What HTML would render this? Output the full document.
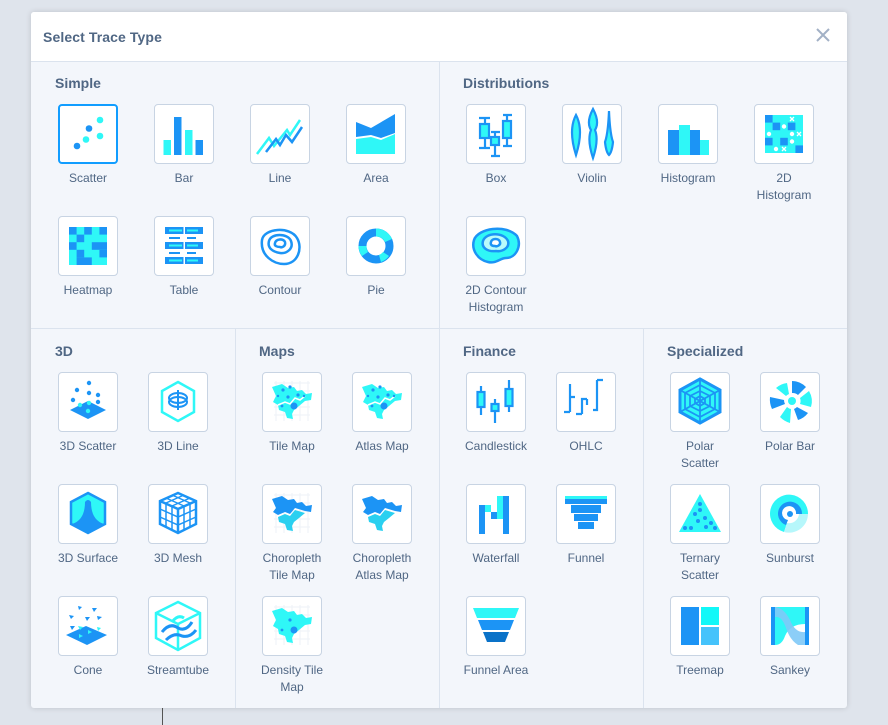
<!DOCTYPE html>
<html><head><meta charset="utf-8"><style>
*{margin:0;padding:0;box-sizing:border-box}
body{width:888px;height:725px;background:#dfe4ec;font-family:"Liberation Sans",sans-serif;position:relative;overflow:hidden}
.bgl{position:absolute;background:#cfd6e0}
.modal{position:absolute;left:31px;top:12px;width:816px;height:696px;background:#f3f6fb;border-radius:3px;box-shadow:0 0 6px rgba(0,0,0,.15);overflow:hidden}
.hdr{position:absolute;left:0;top:0;width:816px;height:50px;background:#fff;border-bottom:1px solid #dbe3ee}
.hdr .t{position:absolute;left:12px;top:17px;font-size:14px;color:#506784;font-weight:bold;letter-spacing:.1px}
.x{position:absolute;left:784px;top:15px}
.v{position:absolute;width:1px;background:#dbe3ee}
.h{position:absolute;height:1px;background:#dbe3ee}
.st{position:absolute;font-size:14px;color:#506784;font-weight:bold}
.it{position:absolute;width:90px}
.bx{position:absolute;left:15px;top:0;width:60px;height:60px;background:#fff;border:1px solid #c8d4e3;border-radius:4px}
.bx.sel{border:2px solid #119dff}
.bx svg{position:absolute;left:-1px;top:-1px}
.lb{position:absolute;left:-5px;top:66px;width:100px;text-align:center;font-size:12px;line-height:17px;color:#506784}
</style></head><body>
<div class="bgl" style="left:162px;top:708px;width:1px;height:17px;background:#555"></div>
<div class="modal">
<div class="hdr"><div class="t">Select Trace Type</div>
<svg class="x" width="16" height="16" viewBox="0 0 16 16"><path d="M2 2L14 14M14 2L2 14" stroke="#a2b1c6" stroke-width="2"/></svg></div>
<div class="v" style="left:408px;top:50px;height:646px"></div>
<div class="h" style="left:0;top:316px;width:816px"></div>
<div class="v" style="left:204px;top:317px;height:379px"></div>
<div class="v" style="left:612px;top:317px;height:379px"></div>
<div class="st" style="left:24px;top:63px">Simple</div>
<div class="st" style="left:432px;top:63px">Distributions</div>
<div class="st" style="left:24px;top:331px">3D</div>
<div class="st" style="left:228px;top:331px">Maps</div>
<div class="st" style="left:432px;top:331px">Finance</div>
<div class="st" style="left:636px;top:331px">Specialized</div>
</div>
<div id="items" style="position:absolute;left:0;top:0">
<!-- Simple -->
<div class="it" style="left:43px;top:104px"><div class="bx sel"><svg width="60" height="60" viewBox="0 0 60 60"><circle cx="18" cy="41" r="3.3" fill="#1c94f5"/><circle cx="27" cy="34.5" r="3.3" fill="#2ff7f7"/><circle cx="30" cy="23.5" r="3.3" fill="#1c94f5"/><circle cx="41" cy="31" r="3.3" fill="#2ff7f7"/><circle cx="41" cy="15" r="3.3" fill="#2ff7f7"/></svg></div><div class="lb">Scatter</div></div>
<div class="it" style="left:139px;top:104px"><div class="bx"><svg width="60" height="60" viewBox="0 0 60 60"><rect x="9.5" y="36" width="7.5" height="15" fill="#2ff7f7"/><rect x="20" y="13" width="7.5" height="38" fill="#1c94f5"/><rect x="31" y="26" width="7.5" height="25" fill="#2ff7f7"/><rect x="41.5" y="36" width="7.5" height="15" fill="#1c94f5"/></svg></div><div class="lb">Bar</div></div>
<div class="it" style="left:235px;top:104px"><div class="bx"><svg width="60" height="60" viewBox="0 0 60 60"><path d="M7 50L19 34L24 42L37 26L40 31L50 16" stroke="#2ff7f7" stroke-width="2.5" fill="none"/><path d="M16 48L26 35L30 41L36 31L42 38L52 23" stroke="#1c94f5" stroke-width="2.5" fill="none"/></svg></div><div class="lb">Line</div></div>
<div class="it" style="left:331px;top:104px"><div class="bx"><svg width="60" height="60" viewBox="0 0 60 60"><path d="M10 18L25 24L49 10L49 29L35 34L25 31L10 33Z" fill="#1c94f5"/><path d="M10 35L25 33L35 36L49 30L49 50L10 50Z" fill="#2ff7f7"/></svg></div><div class="lb">Area</div></div>
<div class="it" style="left:43px;top:216px"><div class="bx"><svg width="60" height="60" viewBox="0 0 60 60"><rect x="11" y="11" width="38" height="38" fill="#2ff7f7"/><g fill="#1c94f5"><rect x="11" y="11" width="7.6" height="7.6"/><rect x="26.2" y="11" width="7.6" height="7.6"/><rect x="41.4" y="11" width="7.6" height="7.6"/><rect x="18.6" y="18.6" width="7.6" height="7.6"/><rect x="11" y="26.2" width="7.6" height="7.6"/><rect x="33.8" y="26.2" width="15.2" height="7.6"/><rect x="18.6" y="33.8" width="7.6" height="7.6"/><rect x="41.4" y="33.8" width="7.6" height="7.6"/><rect x="18.6" y="41.4" width="15.2" height="7.6"/></g></svg></div><div class="lb">Heatmap</div></div>
<div class="it" style="left:139px;top:216px"><div class="bx"><svg width="60" height="60" viewBox="0 0 60 60"><g fill="#1c94f5"><rect x="11" y="11" width="38" height="7"/><rect x="11" y="26" width="38" height="7"/><rect x="11" y="41" width="38" height="7"/></g><g fill="#2ff7f7"><rect x="15" y="13.5" width="13" height="2"/><rect x="33" y="13.5" width="11" height="2"/><rect x="15" y="28.5" width="13" height="2"/><rect x="33" y="28.5" width="11" height="2"/><rect x="15" y="43.5" width="13" height="2"/><rect x="33" y="43.5" width="11" height="2"/></g><g fill="#1c94f5"><rect x="15" y="21" width="11" height="2"/><rect x="33" y="21" width="9" height="2"/><rect x="15" y="36" width="11" height="2"/><rect x="33" y="36" width="9" height="2"/></g><rect x="29.5" y="11" width="1.5" height="37" fill="#fff"/></svg></div><div class="lb">Table</div></div>
<div class="it" style="left:235px;top:216px"><div class="bx"><svg width="60" height="60" viewBox="0 0 60 60" fill="none" stroke="#1c94f5" stroke-width="2.5"><path d="M12 24C14 12 40 10 47 22C53 32 48 48 34 48C24 48 10 40 12 24Z"/><path d="M19 25C21 17 38 17 41 25C44 33 36 38 30 37C23 36 17 32 19 25Z"/><path d="M25 27C26 23 33 22 35 26C36 30 32 32 30 31C27 31 24 30 25 27Z"/></svg></div><div class="lb">Contour</div></div>
<div class="it" style="left:331px;top:216px"><div class="bx"><svg width="60" height="60" viewBox="0 0 60 60"><circle cx="30" cy="30" r="13.5" fill="none" stroke="#1c94f5" stroke-width="8"/><path d="M30 12.5A17.5 17.5 0 0 1 46 23L39 26A9.5 9.5 0 0 0 30 20.5Z" fill="#2ff7f7"/><path d="M12.5 30A17.5 17.5 0 0 0 16 40L22 36A9.5 9.5 0 0 1 20.5 30Z" fill="#2ff7f7"/><path d="M35 46A17.5 17.5 0 0 0 43 40L37 36A9.5 9.5 0 0 1 33 39Z" fill="#2ff7f7"/></svg></div><div class="lb">Pie</div></div>
<!-- Distributions -->
<div class="it" style="left:451px;top:104px"><div class="bx"><svg width="60" height="60" viewBox="0 0 60 60" stroke="#1c94f5" stroke-width="2.2"><path d="M19 14V44M13 14H24M13 44H24M29 28V52M25 28H34M25 52H34M41 11V42M37 11H46M37 42H46" fill="none"/><rect x="14" y="20" width="9" height="14" fill="#2ff7f7"/><rect x="25" y="33" width="8" height="8" fill="#2ff7f7"/><rect x="37" y="17" width="8" height="17" fill="#2ff7f7"/></svg></div><div class="lb">Box</div></div>
<div class="it" style="left:547px;top:104px"><div class="bx"><svg width="60" height="60" viewBox="0 0 60 60" stroke="#1c94f5" stroke-width="2.2"><path d="M14 11Q6 26 14 51Q22 26 14 11Z" fill="#2ff7f7"/><path d="M31 5Q24 18 29 26Q25 36 31 54Q37 36 33 26Q38 18 31 5Z" fill="#2ff7f7"/><path d="M47 7Q46 30 43 38Q44 48 47 51Q50 48 51 38Q48 30 47 7Z" fill="#2ff7f7"/></svg></div><div class="lb">Violin</div></div>
<div class="it" style="left:643px;top:104px"><div class="bx"><svg width="60" height="60" viewBox="0 0 60 60"><rect x="10" y="26" width="11" height="25" fill="#1c94f5"/><rect x="21" y="21" width="11" height="30" fill="#2ff7f7"/><rect x="32" y="26" width="10" height="25" fill="#1c94f5"/><rect x="42" y="36" width="9" height="15" fill="#2ff7f7"/></svg></div><div class="lb">Histogram</div></div>
<div class="it" style="left:739px;top:104px"><div class="bx"><svg width="60" height="60" viewBox="0 0 60 60"><rect x="11" y="11" width="38" height="38" fill="#2ff7f7"/><g fill="#1c94f5"><rect x="11" y="11" width="7.6" height="7.6"/><rect x="18.6" y="18.6" width="7.6" height="7.6"/><rect x="33.8" y="18.6" width="7.6" height="7.6"/><rect x="11" y="33.8" width="7.6" height="7.6"/><rect x="41.4" y="41.4" width="7.6" height="7.6"/><rect x="26.2" y="33.8" width="7.6" height="7.6"/></g><g fill="#fff"><circle cx="30" cy="22.5" r="2.2"/><circle cx="15" cy="30" r="2.2"/><circle cx="38" cy="30" r="2.2"/><circle cx="38" cy="37.5" r="2.2"/><circle cx="22" cy="45" r="2.2"/></g><path d="M36 13L40 17M40 13L36 17M43 28L47 32M47 28L43 32M28 43L32 47M32 43L28 47" stroke="#fff" stroke-width="1.3"/></svg></div><div class="lb">2D<br>Histogram</div></div>
<div class="it" style="left:451px;top:216px"><div class="bx"><svg width="60" height="60" viewBox="0 0 60 60" stroke="#1c94f5" stroke-width="2.5"><path d="M8 24C12 12 40 8 51 20C56 30 50 42 40 42C34 42 30 48 22 46C12 44 5 34 8 24Z" fill="#2ff7f7"/><path d="M17 25C20 16 38 16 42 25C44 32 36 36 30 35C22 36 15 32 17 25Z" fill="#b8fbfb"/><path d="M25 26C26 22 33 22 34 26C35 29 31 31 29 30C26 30 24 29 25 26Z" fill="#fff"/></svg></div><div class="lb">2D Contour<br>Histogram</div></div>
<!-- 3D -->
<div class="it" style="left:43px;top:372px"><div class="bx"><svg width="60" height="60" viewBox="0 0 60 60"><path d="M12 38L30 29L48 38L30 47Z" fill="#1c94f5"/><g fill="#1c94f5"><circle cx="31" cy="11" r="2.2"/><circle cx="19" cy="18" r="2.2"/><circle cx="31" cy="21" r="2.2"/><circle cx="40" cy="23" r="2.2"/><circle cx="15" cy="28" r="2.2"/><circle cx="40" cy="30" r="2.2"/></g><g fill="#2ff7f7"><circle cx="22" cy="33" r="2.2"/><circle cx="31" cy="31" r="2.2"/><circle cx="30" cy="39" r="2.2"/></g></svg></div><div class="lb">3D Scatter</div></div>
<div class="it" style="left:133px;top:372px"><div class="bx"><svg width="60" height="60" viewBox="0 0 60 60" fill="none"><path d="M30 10L46 19V40L30 49L14 40V19Z" stroke="#2ff7f7" stroke-width="2.5"/><ellipse cx="30" cy="26" rx="9" ry="5" stroke="#1c94f5" stroke-width="2"/><ellipse cx="30" cy="30" rx="9" ry="5" stroke="#1c94f5" stroke-width="2"/><path d="M30 18V38" stroke="#1c94f5" stroke-width="2"/></svg></div><div class="lb">3D Line</div></div>
<div class="it" style="left:43px;top:484px"><div class="bx"><svg width="60" height="60" viewBox="0 0 60 60"><path d="M30 9L47 18V40L30 49L13 40V18Z" fill="#2ff7f7" stroke="#1c94f5" stroke-width="2.5"/><path d="M14 40Q27 36 27 18Q30 14 33 18Q33 36 46 40L30 48Z" fill="#1c94f5"/></svg></div><div class="lb">3D Surface</div></div>
<div class="it" style="left:133px;top:484px"><div class="bx"><svg width="60" height="60" viewBox="0 0 60 60" fill="none" stroke="#1c94f5" stroke-width="2.5"><path d="M30 9L48 17V40L30 49L12 40V17Z M12 17L30 25L48 17 M30 25V49"/><path d="M18 20V44M24 23V47M36 23V47M42 20V44M12 25L30 33L48 25M12 33L30 41L48 33M18 14L36 22M24 11L42 19M42 14L24 22M36 11L18 19" stroke-width="1.5"/></svg></div><div class="lb">3D Mesh</div></div>
<div class="it" style="left:43px;top:596px"><div class="bx"><svg width="60" height="60" viewBox="0 0 60 60"><path d="M8 39L28 30L49 39L29 49Z" fill="#1c94f5"/><g fill="#1c94f5"><path d="M20 10l4 1-3 3z"/><path d="M34 12l5 0-3 4z"/><path d="M11 19l5 1-3 3z"/><path d="M27 21l5 0-3 4z"/><path d="M39 20l5 1-4 3z"/><path d="M12 30l5 0-3 4z"/></g><g fill="#2ff7f7"><path d="M20 30l5 1-3 3z"/><path d="M30 34l4 2-4 2z"/><path d="M39 31l4 1-3 3z"/><path d="M21 38l4 2-4 2z"/></g></svg></div><div class="lb">Cone</div></div>
<div class="it" style="left:133px;top:596px"><div class="bx"><svg width="60" height="60" viewBox="0 0 60 60" fill="none"><path d="M30 6L52 17V42L30 54L8 42V17Z M8 17L30 28L52 17 M30 28V54" stroke="#2ff7f7" stroke-width="2.5"/><path d="M14 36Q22 26 30 32Q38 36 44 26" stroke="#1c94f5" stroke-width="3"/><path d="M18 44Q26 36 34 40Q42 42 48 34" stroke="#1c94f5" stroke-width="3"/><path d="M24 26Q30 18 36 22" stroke="#2ff7f7" stroke-width="3"/></svg></div><div class="lb">Streamtube</div></div>
<!-- Maps -->
<div class="it" style="left:247px;top:372px"><div class="bx"><svg width="60" height="60" viewBox="0 0 60 60"><path d="M12 11H48M12 19H48M12 27H48M12 35H48M12 43H48M14 9V49M22 9V49M30 9V49M38 9V49M46 9V49" stroke="#eef2f7" stroke-width="1"/><path d="M10 15L20 12L26 16L32 15L35 19L40 18L44 22L50 21L49 28L43 29L37 34L32 38L30 42L31 47L25 46L23 40L17 38L16 33L11 30L14 24Z" fill="#2ff7f7"/><path d="M16 33L23 30L28 32L33 26L38 28L43 24" stroke="#fff" stroke-width="1.5" fill="none"/><g fill="#1c94f5"><circle cx="32" cy="34" r="3.5"/><circle cx="21" cy="18" r="1.6"/><circle cx="28" cy="15" r="1.6"/><circle cx="26" cy="25" r="1.6"/><circle cx="36" cy="23" r="1.6"/><circle cx="42" cy="24" r="1.2"/><circle cx="20" cy="34" r="1.4"/><circle cx="16" cy="24" r="1.2"/></g></svg></div><div class="lb">Tile Map</div></div>
<div class="it" style="left:337px;top:372px"><div class="bx"><svg width="60" height="60" viewBox="0 0 60 60"><path d="M10 15L20 12L26 16L32 15L35 19L40 18L44 22L50 21L49 28L43 29L37 34L32 38L30 42L31 47L25 46L23 40L17 38L16 33L11 30L14 24Z" fill="#2ff7f7"/><path d="M16 33L23 30L28 32L33 26L38 28L43 24" stroke="#fff" stroke-width="1.5" fill="none"/><g fill="#1c94f5"><circle cx="32" cy="34" r="3.5"/><circle cx="21" cy="18" r="1.6"/><circle cx="28" cy="15" r="1.6"/><circle cx="26" cy="25" r="1.6"/><circle cx="36" cy="23" r="1.6"/><circle cx="42" cy="24" r="1.2"/><circle cx="20" cy="34" r="1.4"/><circle cx="16" cy="24" r="1.2"/></g></svg></div><div class="lb">Atlas Map</div></div>
<div class="it" style="left:247px;top:484px"><div class="bx"><svg width="60" height="60" viewBox="0 0 60 60"><path d="M12 11H48M12 19H48M12 27H48M12 35H48M12 43H48M14 9V49M22 9V49M30 9V49M38 9V49M46 9V49" stroke="#eef2f7" stroke-width="1"/><path d="M10 15L20 12L26 16L32 15L35 19L40 18L44 22L50 21L49 28L43 27L33 24L28 30L23 28L16 31L11 28L14 24Z" fill="#1c94f5"/><path d="M16 33L23 30L28 32L33 26L43 29L37 34L32 38L30 42L31 47L25 46L23 40L17 38Z" fill="#2ad0f0"/></svg></div><div class="lb">Choropleth<br>Tile Map</div></div>
<div class="it" style="left:337px;top:484px"><div class="bx"><svg width="60" height="60" viewBox="0 0 60 60"><path d="M10 15L20 12L26 16L32 15L35 19L40 18L44 22L50 21L49 28L43 27L33 24L28 30L23 28L16 31L11 28L14 24Z" fill="#1c94f5"/><path d="M16 33L23 30L28 32L33 26L43 29L37 34L32 38L30 42L31 47L25 46L23 40L17 38Z" fill="#2ad0f0"/></svg></div><div class="lb">Choropleth<br>Atlas Map</div></div>
<div class="it" style="left:247px;top:596px"><div class="bx"><svg width="60" height="60" viewBox="0 0 60 60"><path d="M12 11H48M12 19H48M12 27H48M12 35H48M12 43H48M14 9V49M22 9V49M30 9V49M38 9V49M46 9V49" stroke="#eef2f7" stroke-width="1"/><path d="M10 15L20 12L26 16L32 15L35 19L40 18L44 22L50 21L49 28L43 29L37 34L32 38L30 42L31 47L25 46L23 40L17 38L16 33L11 30L14 24Z" fill="#2ff7f7"/><g fill="#1c94f5"><circle cx="32" cy="34" r="3.5"/><circle cx="28" cy="24" r="1.6"/><circle cx="20" cy="34" r="1.4"/></g></svg></div><div class="lb">Density Tile<br>Map</div></div>
<!-- Finance -->
<div class="it" style="left:451px;top:372px"><div class="bx"><svg width="60" height="60" viewBox="0 0 60 60" stroke="#1c94f5" stroke-width="2.2"><path d="M15 14V43M29 27V51M43 8V40" fill="none"/><rect x="11.5" y="20" width="7" height="15" fill="#2ff7f7"/><rect x="25.5" y="32" width="7" height="7" fill="#2ff7f7"/><rect x="39.5" y="17" width="7" height="17" fill="#2ff7f7"/></svg></div><div class="lb">Candlestick</div></div>
<div class="it" style="left:541px;top:372px"><div class="bx"><svg width="60" height="60" viewBox="0 0 60 60" fill="none" stroke="#1c94f5" stroke-width="2.2"><path d="M14 12V40M8 40H14M14 25H19M26 42V27H31M20 42H26M31 27V33M41 8V38H37M41 8H47"/></svg></div><div class="lb">OHLC</div></div>
<div class="it" style="left:451px;top:484px"><div class="bx"><svg width="60" height="60" viewBox="0 0 60 60"><rect x="13" y="21" width="6" height="29" fill="#1c94f5"/><rect x="19" y="21" width="6" height="7" fill="#2ff7f7"/><rect x="25" y="28" width="6" height="7" fill="#1c94f5"/><rect x="31" y="12" width="6" height="23" fill="#2ff7f7"/><rect x="37" y="12" width="6" height="38" fill="#1c94f5"/></svg></div><div class="lb">Waterfall</div></div>
<div class="it" style="left:541px;top:484px"><div class="bx"><svg width="60" height="60" viewBox="0 0 60 60"><rect x="9" y="12" width="42" height="8" fill="#1c94f5"/><rect x="15" y="21" width="30" height="8" fill="#1c94f5"/><rect x="18" y="30" width="24" height="7" fill="#1c94f5"/><rect x="22" y="38" width="16" height="7" fill="#1c94f5"/><rect x="9" y="12" width="42" height="3" fill="#2ff7f7"/></svg></div><div class="lb">Funnel</div></div>
<div class="it" style="left:451px;top:596px"><div class="bx"><svg width="60" height="60" viewBox="0 0 60 60"><path d="M7 12H53L49 22H11Z" fill="#2ff7f7"/><path d="M12 24H48L44 34H16Z" fill="#1c94f5"/><path d="M17 36H43L39 46H21Z" fill="#0a72c8"/></svg></div><div class="lb">Funnel Area</div></div>
<!-- Specialized -->
<div class="it" style="left:655px;top:372px"><div class="bx"><svg width="60" height="60" viewBox="0 0 60 60" fill="none" stroke="#1c94f5" stroke-width="1.8"><path d="M30 7L50 18V40L30 51L10 40V18Z" fill="#2ff7f7" stroke-width="3"/><path d="M30 13L45 21V37L30 45L15 37V21Z M30 19L40 24V34L30 39L20 34V24Z M30 24L35 27V31L30 34L25 31V27Z M30 7V51M10 18L50 40M50 18L10 40"/></svg></div><div class="lb">Polar<br>Scatter</div></div>
<div class="it" style="left:745px;top:372px"><div class="bx"><svg width="60" height="60" viewBox="0 0 60 60"><g transform="translate(32,29)"><path d="M0 -20A20 20 0 0 1 14 -14L6 -6A8 8 0 0 0 0 -8Z" fill="#1c94f5"/><path d="M17 -10A20 20 0 0 1 19 6L8 3A8 8 0 0 0 8 -3Z" fill="#2ff7f7"/><path d="M16 12A20 20 0 0 1 6 19L2 8A8 8 0 0 0 5 6Z" fill="#1c94f5"/><path d="M-2 22A22 22 0 0 1 -12 16L-5 6A8 8 0 0 0 -1 8Z" fill="#2ff7f7"/><path d="M-20 8A22 22 0 0 1 -22 -4L-8 -1A8 8 0 0 0 -7 3Z" fill="#1c94f5"/><path d="M-16 -13A20 20 0 0 1 -5 -18L-3 -7A8 8 0 0 0 -6 -5Z" fill="#2ff7f7"/><circle r="4" fill="#2ff7f7"/></g></svg></div><div class="lb">Polar Bar</div></div>
<div class="it" style="left:655px;top:484px"><div class="bx"><svg width="60" height="60" viewBox="0 0 60 60"><path d="M30 10L51 48H9Z" fill="#2ff7f7"/><g fill="#1c94f5"><circle cx="30" cy="20" r="2"/><circle cx="30" cy="26" r="2"/><circle cx="25" cy="30" r="2"/><circle cx="35" cy="34" r="2"/><circle cx="28" cy="37" r="2"/><circle cx="41" cy="39" r="2"/><circle cx="15" cy="44" r="2"/><circle cx="21" cy="44" r="2"/><circle cx="36" cy="43" r="2"/><circle cx="45" cy="44" r="2"/></g></svg></div><div class="lb">Ternary<br>Scatter</div></div>
<div class="it" style="left:745px;top:484px"><div class="bx"><svg width="60" height="60" viewBox="0 0 60 60"><path d="M48 30A19 19 0 1 0 24 48L27 39A10 10 0 1 1 39 30Z" fill="#2ff7f7"/><path d="M42 30A12 12 0 1 0 26 41L28 36A7 7 0 1 1 36 30Z" fill="#1c94f5"/><path d="M48 30A19 19 0 0 1 24 48L27 39A10 10 0 0 0 39 30Z" fill="#b6f7fb"/><circle cx="30" cy="30" r="3" fill="#1c94f5"/></svg></div><div class="lb">Sunburst</div></div>
<div class="it" style="left:655px;top:596px"><div class="bx"><svg width="60" height="60" viewBox="0 0 60 60"><rect x="11" y="11" width="18" height="38" fill="#1c94f5"/><rect x="31" y="11" width="18" height="18" fill="#12f8f8"/><rect x="31" y="31" width="18" height="18" fill="#45c3fb"/></svg></div><div class="lb">Treemap</div></div>
<div class="it" style="left:745px;top:596px"><div class="bx"><svg width="60" height="60" viewBox="0 0 60 60"><rect x="11" y="11" width="4" height="38" fill="#1c94f5"/><rect x="45" y="11" width="4" height="38" fill="#1c94f5"/><path d="M15 11H45V28Q30 28 25 40Q22 49 15 49Z" fill="#2ff7f7"/><path d="M15 11Q24 12 30 24Q35 37 45 36V49H38Q30 44 26 32Q22 20 15 21Z" fill="#7fc9f7" opacity=".9"/></svg></div><div class="lb">Sankey</div></div>
</div>
</body></html>
